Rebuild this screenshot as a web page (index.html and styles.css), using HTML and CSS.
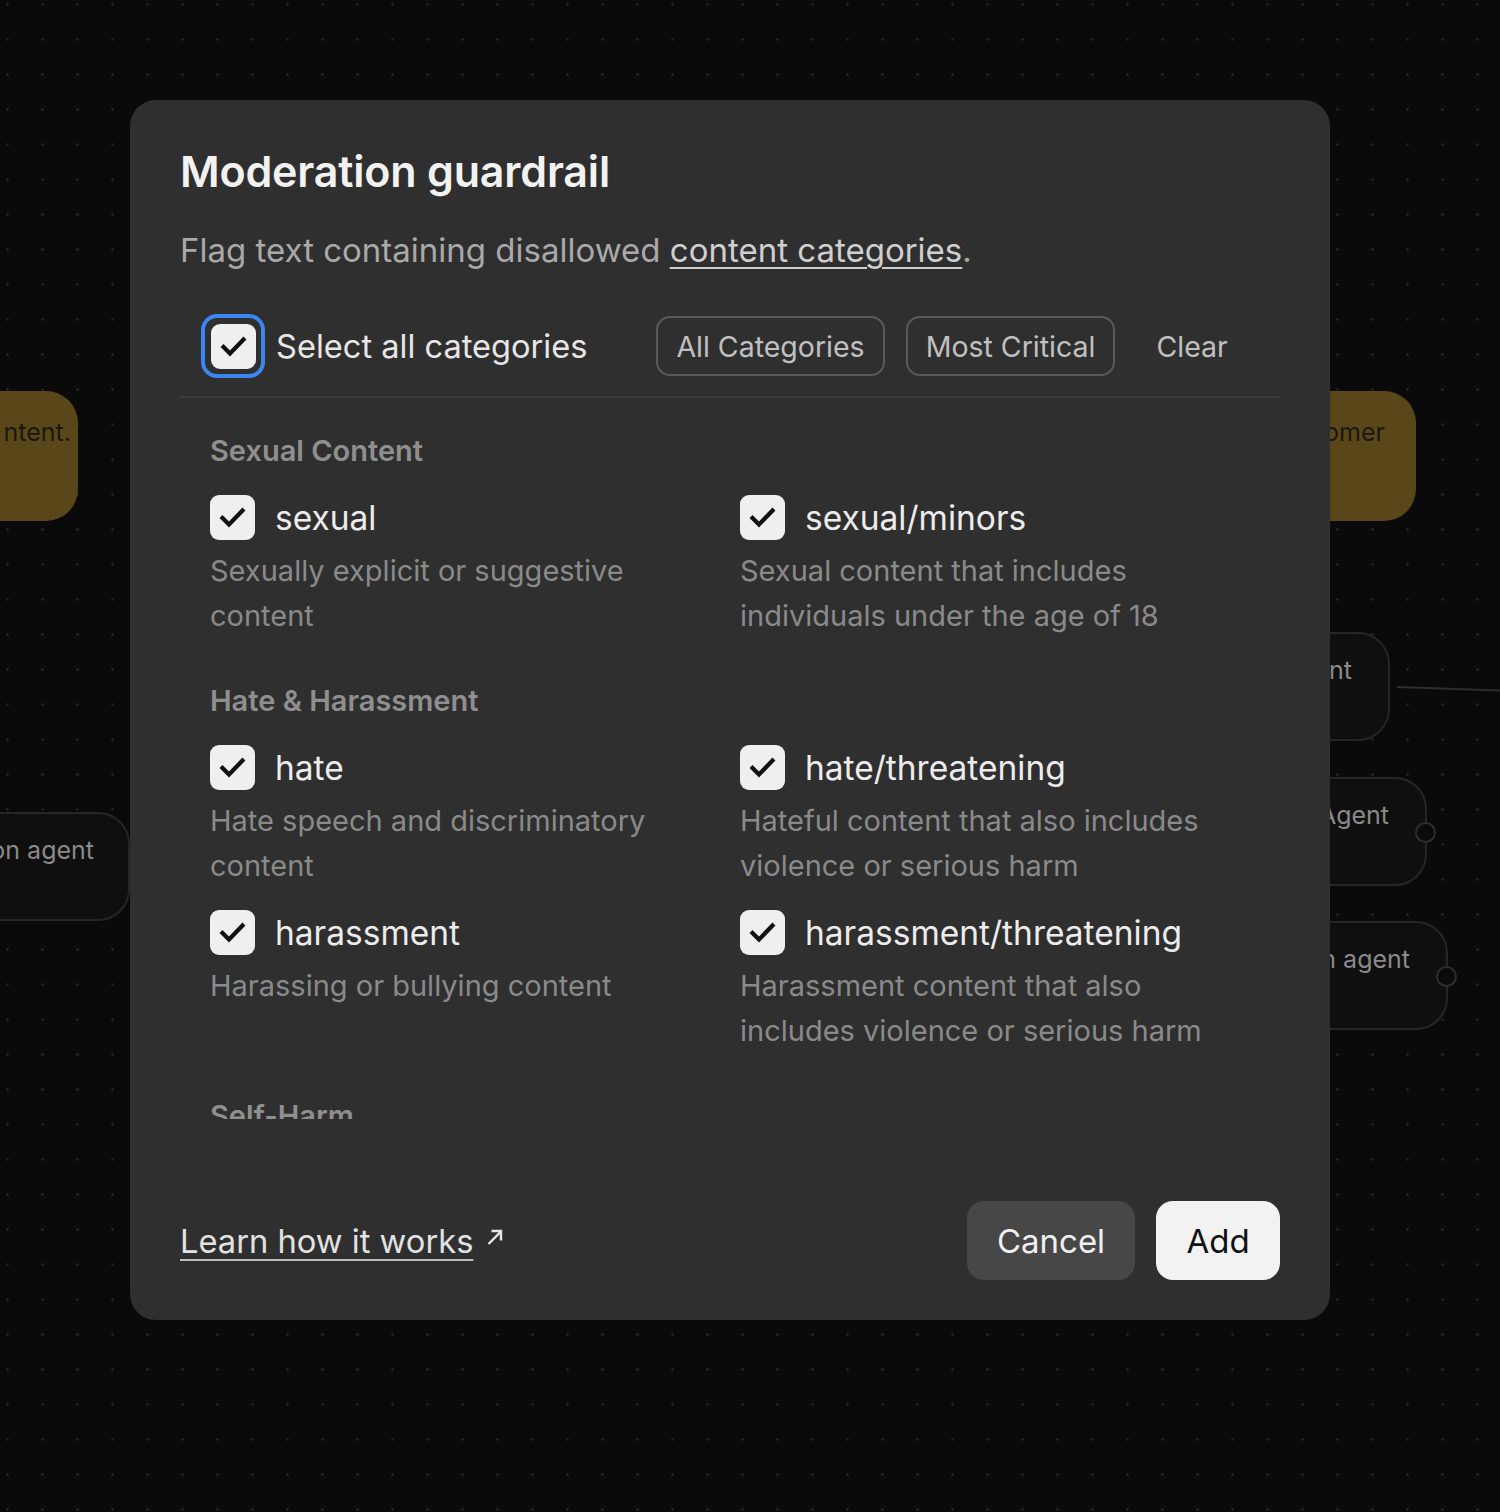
FILE: index.html
```html
<!DOCTYPE html>
<html lang="en">
<head>
<meta charset="utf-8">
<title>Moderation guardrail</title>
<link rel="stylesheet" href="styles.css">
</head>
<body>
<div class="canvas">
  <div class="node node-gold node-l1"><span>ntent.</span></div>
  <div class="node node-dark node-l2"><span>on agent</span></div>
  <div class="node node-gold node-r1"><span>omer</span></div>
  <div class="node node-dark node-r2"><span>nt</span></div>
  <div class="edge"></div>
  <div class="node node-dark node-r3"><span>Agent</span><i class="handle"></i></div>
  <div class="node node-dark node-r4"><span>n agent</span><i class="handle"></i></div>
</div>

<div class="modal">
  <h1 class="title">Moderation guardrail</h1>
  <p class="subtitle">Flag text containing disallowed <a class="inline-link">content categories</a>.</p>

  <div class="toolbar">
    <label class="select-all">
      <span class="focus-ring"><span class="box"><svg viewBox="0 0 45 45" width="45" height="45"><path d="M12.5 23 L19 29.5 L32.5 15.5" fill="none" stroke="#111" stroke-width="4.2" stroke-linecap="square"/></svg></span></span>
      <span class="select-text">Select all categories</span>
    </label>
    <div class="filters">
      <button class="chip">All Categories</button>
      <button class="chip">Most Critical</button>
      <button class="clear">Clear</button>
    </div>
  </div>

  <div class="list">
    <section class="section">
      <h2 class="section-title">Sexual Content</h2>
      <div class="grid">
        <div class="item">
          <div class="item-head"><span class="box"><svg viewBox="0 0 45 45" width="45" height="45"><path d="M12.5 23 L19 29.5 L32.5 15.5" fill="none" stroke="#111" stroke-width="4.2" stroke-linecap="square"/></svg></span><span class="label">sexual</span></div>
          <p class="desc">Sexually explicit or suggestive content</p>
        </div>
        <div class="item">
          <div class="item-head"><span class="box"><svg viewBox="0 0 45 45" width="45" height="45"><path d="M12.5 23 L19 29.5 L32.5 15.5" fill="none" stroke="#111" stroke-width="4.2" stroke-linecap="square"/></svg></span><span class="label">sexual/minors</span></div>
          <p class="desc">Sexual content that includes individuals under the age of 18</p>
        </div>
      </div>
    </section>

    <section class="section">
      <h2 class="section-title">Hate &amp; Harassment</h2>
      <div class="grid">
        <div class="item">
          <div class="item-head"><span class="box"><svg viewBox="0 0 45 45" width="45" height="45"><path d="M12.5 23 L19 29.5 L32.5 15.5" fill="none" stroke="#111" stroke-width="4.2" stroke-linecap="square"/></svg></span><span class="label">hate</span></div>
          <p class="desc">Hate speech and discriminatory content</p>
        </div>
        <div class="item">
          <div class="item-head"><span class="box"><svg viewBox="0 0 45 45" width="45" height="45"><path d="M12.5 23 L19 29.5 L32.5 15.5" fill="none" stroke="#111" stroke-width="4.2" stroke-linecap="square"/></svg></span><span class="label">hate/threatening</span></div>
          <p class="desc">Hateful content that also includes violence or serious harm</p>
        </div>
        <div class="item">
          <div class="item-head"><span class="box"><svg viewBox="0 0 45 45" width="45" height="45"><path d="M12.5 23 L19 29.5 L32.5 15.5" fill="none" stroke="#111" stroke-width="4.2" stroke-linecap="square"/></svg></span><span class="label">harassment</span></div>
          <p class="desc">Harassing or bullying content</p>
        </div>
        <div class="item">
          <div class="item-head"><span class="box"><svg viewBox="0 0 45 45" width="45" height="45"><path d="M12.5 23 L19 29.5 L32.5 15.5" fill="none" stroke="#111" stroke-width="4.2" stroke-linecap="square"/></svg></span><span class="label">harassment/threatening</span></div>
          <p class="desc">Harassment content that also includes violence or serious harm</p>
        </div>
      </div>
    </section>

    <section class="section">
      <h2 class="section-title">Self-Harm</h2>
      <div class="grid">
        <div class="item">
          <div class="item-head"><span class="box"></span><span class="label">self-harm</span></div>
          <p class="desc">Content that promotes or depicts acts of self-harm</p>
        </div>
      </div>
    </section>
  </div>

  <div class="footer">
    <a class="learn"><span class="learn-text">Learn how it works</span><svg class="arrow" viewBox="0 0 18 18" width="18" height="18"><path d="M2.5 16 L15 3.5 M5.5 3 H15 V12.5" fill="none" stroke="#e6e6e6" stroke-width="2.4"/></svg></a>
    <div class="actions">
      <button class="btn btn-cancel">Cancel</button>
      <button class="btn btn-add">Add</button>
    </div>
  </div>
</div>
</body>
</html>
```

FILE: styles.css
```css
* { box-sizing: border-box; }

html, body {
  margin: 0;
  padding: 0;
}

body {
  width: 1500px;
  height: 1512px;
  overflow: hidden;
  background-color: #0a0a0a;
  background-image: radial-gradient(circle, #222 1px, transparent 1.6px);
  background-size: 35px 35px;
  background-position: -10px -13px;
  font-family: Inter, "Noto Sans", "Liberation Sans", sans-serif;
  position: relative;
}

/* ---------- background canvas ---------- */
.canvas {
  position: absolute;
  inset: 0;
}

.node {
  position: absolute;
  height: 109px;
  border-radius: 32px;
  font-size: 25px;
  display: flex;
  align-items: flex-start;
  justify-content: flex-end;
  padding: 25px 36px 0 0;
  white-space: nowrap;
}

.node-gold {
  background: #5a4719;
  color: #1b170d;
  height: 130px;
}

.node-dark {
  background: #0f0f0f;
  border: 2px solid #262626;
  color: #8a8a8a;
}

.node-l1 { left: -200px; top: 391px; width: 278px; padding-right: 7px; padding-top: 26px; }
.node-l2 { left: -200px; top: 812px; width: 330px; padding-right: 34px; padding-top: 21px; }
.node-r1 { left: 1200px; top: 391px; width: 216px; padding-right: 31px; padding-top: 26px; }
.node-r2 { left: 1200px; top: 632px; width: 190px; padding-right: 36px; padding-top: 21px; }
.node-r3 { left: 1200px; top: 777px; width: 227px; padding-right: 36px; padding-top: 21px; }
.node-r4 { left: 1200px; top: 921px; width: 248px; padding-right: 36px; padding-top: 21px; }

.handle {
  position: absolute;
  right: -11px;
  top: 43px;
  width: 21px;
  height: 21px;
  border-radius: 50%;
  background: #0b0b0b;
  border: 2px solid #2e2e2e;
}

.edge {
  position: absolute;
  left: 1397px;
  top: 686px;
  width: 110px;
  height: 2px;
  background: #2e2e2e;
  transform-origin: left center;
  transform: rotate(2deg);
}

/* ---------- modal ---------- */
.modal {
  position: absolute;
  left: 130px;
  top: 100px;
  width: 1200px;
  height: 1220px;
  background: #2f2f2f;
  border-radius: 26px;
  padding: 46px 50px 40px 50px;
  display: flex;
  flex-direction: column;
}

.title {
  margin: 0;
  font-size: 43px;
  line-height: 50px;
  font-weight: 600;
  color: #f2f2f2;
  letter-spacing: -0.2px;
}

.subtitle {
  margin: 32px 0 0 0;
  font-size: 33px;
  line-height: 44px;
  color: #a9a9a9;
}

.inline-link {
  color: #cfcfcf;
  text-decoration: underline;
  text-decoration-thickness: 2px;
  text-underline-offset: 5px;
}

.toolbar {
  margin-top: 42px;
  display: flex;
  align-items: center;
  padding: 0 0 18px 21px;
  border-bottom: 2px solid #3b3b3b;
}

.select-all {
  display: flex;
  align-items: center;
  gap: 11px;
}

.focus-ring {
  width: 64px;
  height: 64px;
  border: 4px solid #3a87f2;
  border-radius: 16px;
  display: flex;
  align-items: center;
  justify-content: center;
}

.box {
  width: 45px;
  height: 45px;
  border-radius: 9px;
  background: #efefef;
  display: block;
  flex: none;
}

.box svg { display: block; }

.select-text {
  font-size: 32.6px;
  color: #e6e6e6;
}

.filters {
  margin-left: 69px;
  display: flex;
  align-items: center;
  gap: 21px;
}

.chip {
  font-family: inherit;
  font-size: 28.5px;
  height: 60px;
  padding: 0 18px;
  background: transparent;
  color: #c0c0c0;
  border: 2px solid #5a5a5a;
  border-radius: 14px;
}

.clear {
  font-family: inherit;
  font-size: 28.5px;
  background: transparent;
  border: 0;
  color: #c0c0c0;
  padding: 0 0 0 20px;
}

/* ---------- list ---------- */
.list {
  height: 721px;
  overflow: hidden;
  padding: 33px 30px 0 30px;
  flex: none;
}

.section + .section {
  margin-top: 43px;
}

.section-title {
  margin: 0 0 24px 0;
  font-size: 29px;
  line-height: 40px;
  font-weight: 600;
  color: #8f8f8f;
}

.grid {
  display: grid;
  grid-template-columns: 530px 530px;
  row-gap: 22px;
}

.item-head {
  display: flex;
  align-items: center;
  gap: 20px;
  height: 45px;
}

.label {
  font-size: 33.5px;
  color: #ececec;
}

.desc {
  margin: 8px 0 0 0;
  font-size: 29px;
  line-height: 45px;
  color: #8a8a8a;
  max-width: 470px;
}

/* ---------- footer ---------- */
.footer {
  margin-top: auto;
  display: flex;
  align-items: center;
  justify-content: space-between;
}

.learn {
  display: flex;
  align-items: center;
  gap: 13px;
  color: #e2e2e2;
  font-size: 32.7px;
}

.learn-text {
  text-decoration: underline;
  text-decoration-color: #bdbdbd;
  text-decoration-thickness: 2px;
  text-underline-offset: 6px;
}

.arrow { margin-top: -8px; }

.actions {
  display: flex;
  gap: 21px;
}

.btn {
  font-family: inherit;
  font-size: 33px;
  height: 79px;
  border: 0;
  border-radius: 17px;
}

.btn-cancel {
  width: 168px;
  background: #474747;
  color: #f0f0f0;
}

.btn-add {
  width: 124px;
  background: #f2f2f2;
  color: #111;
}
```
